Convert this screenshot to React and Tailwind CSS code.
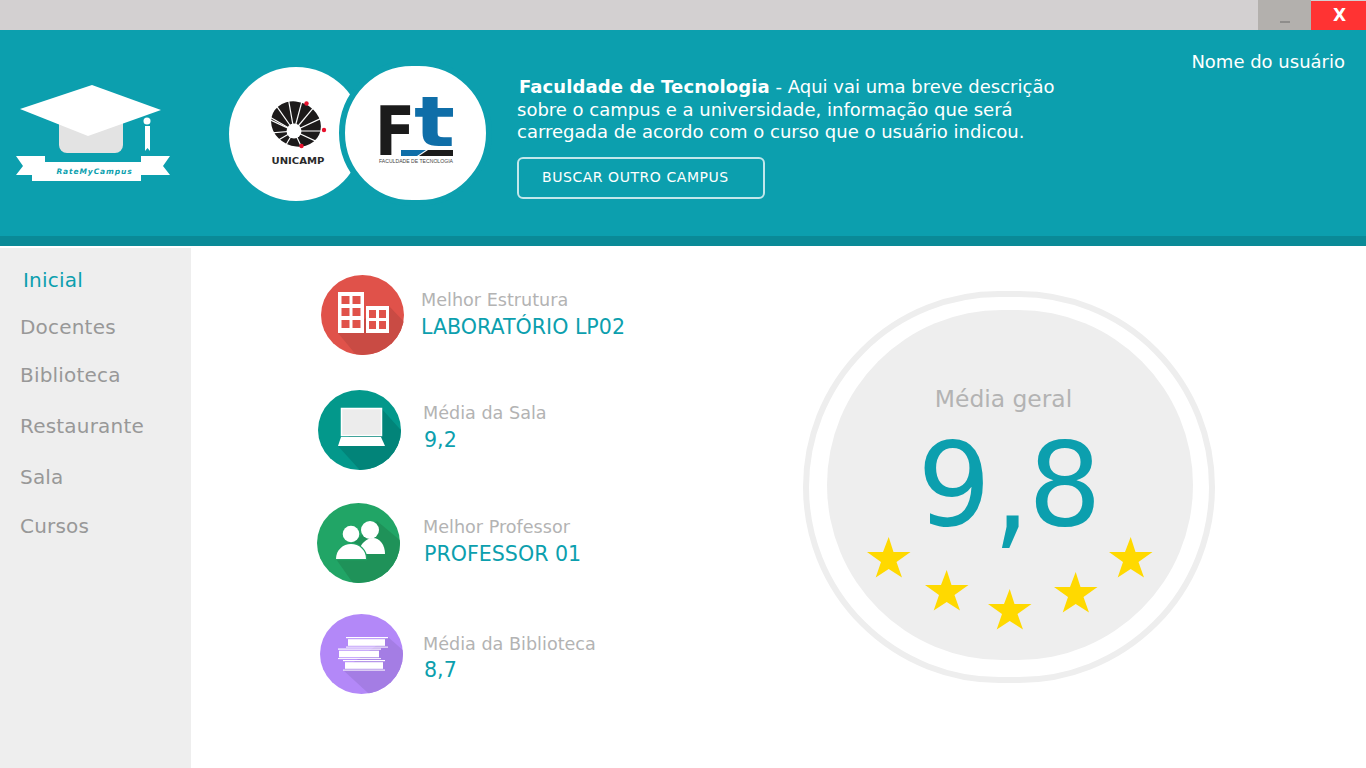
const TEAL = "#0c9fae";

function Logo() {
  return (
    <svg width="156" height="98" viewBox="15 84 156 98" className="shrink-0">
      <polygon points="16,156 45,156 45,162 32,162 32,175 16,175 23,166" fill="#fff" />
      <polygon points="170,156 141,156 141,162 141,175 170,175 163,166" fill="#fff" />
      <rect x="32" y="162" width="109" height="19" fill="#fff" />
      <rect x="59" y="112" width="64" height="41" rx="8" fill="#e3e3e3" />
      <polygon points="92,85 161,110 88,136 20,109" fill="#fff" />
      <circle cx="147" cy="121" r="3.5" fill="#fff" />
      <polygon points="145,126 150,126 150,151 147.5,148 145,151" fill="#fff" />
      <text
        x="94.5"
        y="174"
        textAnchor="middle"
        fill={TEAL}
        fontSize="7.5"
        fontWeight="700"
        fontStyle="italic"
        letterSpacing="0.9"
        fontFamily="'DejaVu Sans', sans-serif"
      >
        RateMyCampus
      </text>
    </svg>
  );
}

function UnicampLogo() {
  const spokes = [-150, -125, -100, -75, -50, -25, 0, 25, 150, 175, 205, 120, 65];
  return (
    <svg width="134" height="134" viewBox="0 0 134 134">
      <ellipse cx="67" cy="57" rx="25.5" ry="22" fill="#1c1a1a" transform="rotate(25 67 57)" />
      {spokes.map((deg) => (
        <line
          key={deg}
          x1="65"
          y1="64"
          x2={65 + 34 * Math.cos((deg * Math.PI) / 180)}
          y2={64 + 34 * Math.sin((deg * Math.PI) / 180)}
          stroke="#fff"
          strokeWidth="1.2"
        />
      ))}
      <circle cx="65" cy="64" r="7.5" fill="#fff" />
      <circle cx="77.5" cy="36.5" r="2.2" fill="#e8112d" />
      <circle cx="95" cy="63" r="2.2" fill="#e8112d" />
      <circle cx="72.5" cy="79" r="2.2" fill="#e8112d" />
      <text
        x="69"
        y="96.5"
        textAnchor="middle"
        fontSize="8.5"
        fontWeight="700"
        fill="#2a2a2a"
        textLength="53"
        lengthAdjust="spacingAndGlyphs"
        fontFamily="'DejaVu Sans', sans-serif"
      >
        UNICAMP
      </text>
    </svg>
  );
}

function FtLogo() {
  return (
    <svg width="141" height="134" viewBox="0 0 141 134">
      <text
        x="30"
        y="89"
        fontSize="67"
        fontWeight="700"
        fill="#1b1b1b"
        textLength="40"
        lengthAdjust="spacingAndGlyphs"
        fontFamily="'DejaVu Sans', sans-serif"
      >
        F
      </text>
      <text
        x="69"
        y="80"
        fontSize="70"
        fontWeight="700"
        fill="#0f6ea8"
        textLength="41"
        lengthAdjust="spacingAndGlyphs"
        fontFamily="'DejaVu Sans', sans-serif"
      >
        t
      </text>
      <polygon points="56,84 81,84 72,90 56,90" fill="#0f6ea8" />
      <polygon points="83,84 108,84 108,90 74,90" fill="#1b1b1b" />
      <text
        x="34"
        y="97"
        fontSize="5"
        fill="#444"
        textLength="74"
        lengthAdjust="spacingAndGlyphs"
        fontFamily="'Liberation Sans', sans-serif"
      >
        FACULDADE DE TECNOLOGIA
      </text>
    </svg>
  );
}

function IconDisc({ id, fill, shadow, shadowPoints, children }) {
  return (
    <svg width="84" height="80" viewBox="0 0 84 80" className="shrink-0">
      <defs>
        <clipPath id={id}>
          <ellipse cx="41.5" cy="40" rx="41.5" ry="40" />
        </clipPath>
      </defs>
      <ellipse cx="41.5" cy="40" rx="41.5" ry="40" fill={fill} />
      <polygon points={shadowPoints} fill={shadow} clipPath={`url(#${id})`} />
      {children}
    </svg>
  );
}

function BuildingIcon() {
  const big = [];
  for (let r = 0; r < 3; r++) {
    for (let c = 0; c < 2; c++) big.push([20.5 + c * 11, 21 + r * 12]);
  }
  const small = [];
  for (let r = 0; r < 2; r++) {
    for (let c = 0; c < 2; c++) small.push([48 + c * 10, 35 + r * 11]);
  }
  return (
    <IconDisc id="disc-red" fill="#e0524a" shadow="#c94b44" shadowPoints="17,58 68,31 110,75 60,110">
      <rect x="17" y="17" width="26" height="41" fill="#fff" />
      <rect x="45" y="31" width="23" height="27" fill="#fff" />
      {big.map(([x, y]) => (
        <rect key={`${x}-${y}`} x={x} y={y} width="8" height="8" fill="#e0524a" />
      ))}
      {small.map(([x, y]) => (
        <rect key={`${x}-${y}`} x={x} y={y} width="7" height="8" fill="#e0524a" />
      ))}
    </IconDisc>
  );
}

function LaptopIcon() {
  return (
    <IconDisc id="disc-teal" fill="#03988b" shadow="#028479" shadowPoints="20,56 63,18 110,70 60,100">
      <rect x="23.5" y="18.5" width="40" height="27" fill="#ececec" stroke="#fff" strokeWidth="1.5" />
      <polygon points="23,47 63,47 67,56 20,56" fill="#fff" />
    </IconDisc>
  );
}

function PeopleIcon() {
  return (
    <IconDisc id="disc-green" fill="#21a566" shadow="#1f9259" shadowPoints="19,56 60,18 110,60 50,100">
      <circle cx="53" cy="27" r="9" fill="#fff" />
      <path d="M41 51 C43 40 50 35 56 35 C63 35 68 42 68 51 Z" fill="#fff" />
      <path d="M19 56 C19 47 26 41 34 41 C42 41 49 47 49 56 Z" fill="#21a566" stroke="#21a566" strokeWidth="2.5" />
      <circle cx="34" cy="31" r="8.3" fill="#fff" />
      <path d="M19 56 C19 47 26 41 34 41 C42 41 49 47 49 56 Z" fill="#fff" />
    </IconDisc>
  );
}

function Book({ x, y, width, pageX, pageWidth }) {
  return (
    <g>
      <rect x={x} y={y} width={width} height="1.2" fill="#fff" />
      <rect x={pageX} y={y + 2.2} width={pageWidth} height="6.6" fill="#fff" />
      <rect x={x} y={y + 9.6} width={width} height="1" fill="#fff" />
    </g>
  );
}

function BooksIcon() {
  return (
    <IconDisc id="disc-purple" fill="#b388f8" shadow="#a47de4" shadowPoints="23,56 68,23 110,60 60,90">
      <Book x={26} y={23} width={42} pageX={28} pageWidth={37} />
      <Book x={18} y={34.5} width={43} pageX={19} pageWidth={40} />
      <Book x={23} y={46} width={42} pageX={25} pageWidth={38} />
    </IconDisc>
  );
}

function Star({ className }) {
  return (
    <svg width="44" height="41" viewBox="0 0 44 41" className={`absolute ${className}`}>
      <polygon points="21.7,0 26.5,15 43.5,15 29.5,25 35,40.5 21.7,32 8.7,40.5 14,25 0,15 16,15" fill="#ffd900" />
    </svg>
  );
}

function Stat({ icon, label, value, className, textClass, valueClass }) {
  return (
    <div className={`flex items-start ${className}`}>
      {icon}
      <div className={textClass}>
        <div className="text-[17.6px] leading-[24.5px] text-[#b3b3b3]">{label}</div>
        <div className={`text-[20.6px] leading-[28px] text-[#0c9fae] ${valueClass}`}>{value}</div>
      </div>
    </div>
  );
}

export default function App() {
  return (
    <div className="flex h-[768px] w-full flex-col overflow-hidden bg-white font-['DejaVu_Sans',sans-serif]">
      <div className="flex h-[30px] shrink-0 justify-end bg-[#d3d0d1]">
        <div className="flex w-[53px] items-end justify-center bg-[#b3b0ad] pb-[7px]">
          <span className="h-[2px] w-[10px] bg-[#8f8d8b]" />
        </div>
        <div className="mt-[1px] flex w-[55px] items-center justify-center bg-[#ff3333] pl-[2px] text-[17px] font-bold text-white">
          X
        </div>
      </div>

      <header className="flex h-[216px] shrink-0 border-b-[10px] border-[#0a8a97] bg-[#0c9fae]">
        <div className="ml-[15px] mt-[54px]">
          <Logo />
        </div>
        <div className="ml-[58px] mt-[37px] flex items-start">
          <div className="h-[134px] w-[134px] shrink-0 rounded-full bg-white">
            <UnicampLogo />
          </div>
          <div className="z-10 -ml-[24px] -mt-[7px] h-[146px] w-[153px] shrink-0 rounded-full border-[6px] border-[#0c9fae] bg-white">
            <FtLogo />
          </div>
        </div>
        <div className="ml-[25px] mt-[46px] w-[570px] text-white">
          <p className="text-[18px] leading-[22.5px]">
            <span className="ml-[2px] font-bold tracking-[0.1px]">Faculdade de Tecnologia</span> - Aqui vai uma breve descrição
            <br />
            sobre o campus e a universidade, informação que será
            <br />
            carregada de acordo com o curso que o usuário indicou.
          </p>
          <button
            type="button"
            className="mt-[13px] flex h-[42px] w-[248px] items-center rounded-md border-[2px] border-white/75 pl-[23px] text-[14px] tracking-[0.55px] text-white"
          >
            BUSCAR OUTRO CAMPUS
          </button>
        </div>
        <div className="ml-auto mr-[21px] mt-[18px] text-[18px] text-white">Nome do usuário</div>
      </header>

      <div className="flex min-h-0 flex-1">
        <nav className="mt-[2px] flex w-[191px] shrink-0 flex-col bg-[#eeeeee] pl-[20px] text-[20px] leading-[30px] tracking-[0.2px] text-[#989898]">
          <a className="ml-[3px] mt-[17px] text-[#0c9fae]">Inicial</a>
          <a className="mt-[17px]">Docentes</a>
          <a className="mt-[18px]">Biblioteca</a>
          <a className="mt-[21px]">Restaurante</a>
          <a className="mt-[21px]">Sala</a>
          <a className="mt-[19px]">Cursos</a>
        </nav>

        <main className="flex flex-1">
          <div className="w-[612px] shrink-0 pl-[126px] pt-[29px]">
            <Stat
              icon={<BuildingIcon />}
              label="Melhor Estrutura"
              value="LABORATÓRIO LP02"
              className="ml-[4px]"
              textClass="ml-[16px] mt-[13px]"
            />
            <Stat
              icon={<LaptopIcon />}
              label="Média da Sala"
              value="9,2"
              className="ml-[1px] mt-[35px]"
              textClass="ml-[21px] mt-[11px]"
              valueClass="ml-[1px]"
            />
            <Stat
              icon={<PeopleIcon />}
              label="Melhor Professor"
              value="PROFESSOR 01"
              className="mt-[33px]"
              textClass="ml-[22px] mt-[12px]"
              valueClass="ml-[1px]"
            />
            <Stat
              icon={<BooksIcon />}
              label="Média da Biblioteca"
              value="8,7"
              className="ml-[3px] mt-[31px]"
              textClass="ml-[19px] mt-[18px]"
              valueClass="ml-[1px] -mt-[1px]"
            />
          </div>

          <div className="mt-[45px] flex h-[392px] w-[412px] shrink-0 items-center justify-center rounded-full border-[6px] border-[#eeeeee]">
            <div className="relative -mt-[4px] ml-[1px] flex h-[350px] w-[366px] flex-col items-center rounded-full bg-[#eeeeee]">
              <div className="mr-[12px] mt-[72px] text-[23.4px] leading-[34px] text-[#b3b3b3]">Média geral</div>
              <div className="mt-[9px] text-[116px] leading-[120px] text-[#0c9fae]">
                9<span className="inline-block origin-center scale-y-[1.17] translate-x-[2px]">,</span>8
              </div>
              <Star className="left-[40px] top-[227px]" />
              <Star className="left-[98px] top-[260px]" />
              <Star className="left-[161px] top-[279px]" />
              <Star className="left-[227px] top-[262px]" />
              <Star className="left-[282px] top-[227px]" />
            </div>
          </div>
        </main>
      </div>
    </div>
  );
}
